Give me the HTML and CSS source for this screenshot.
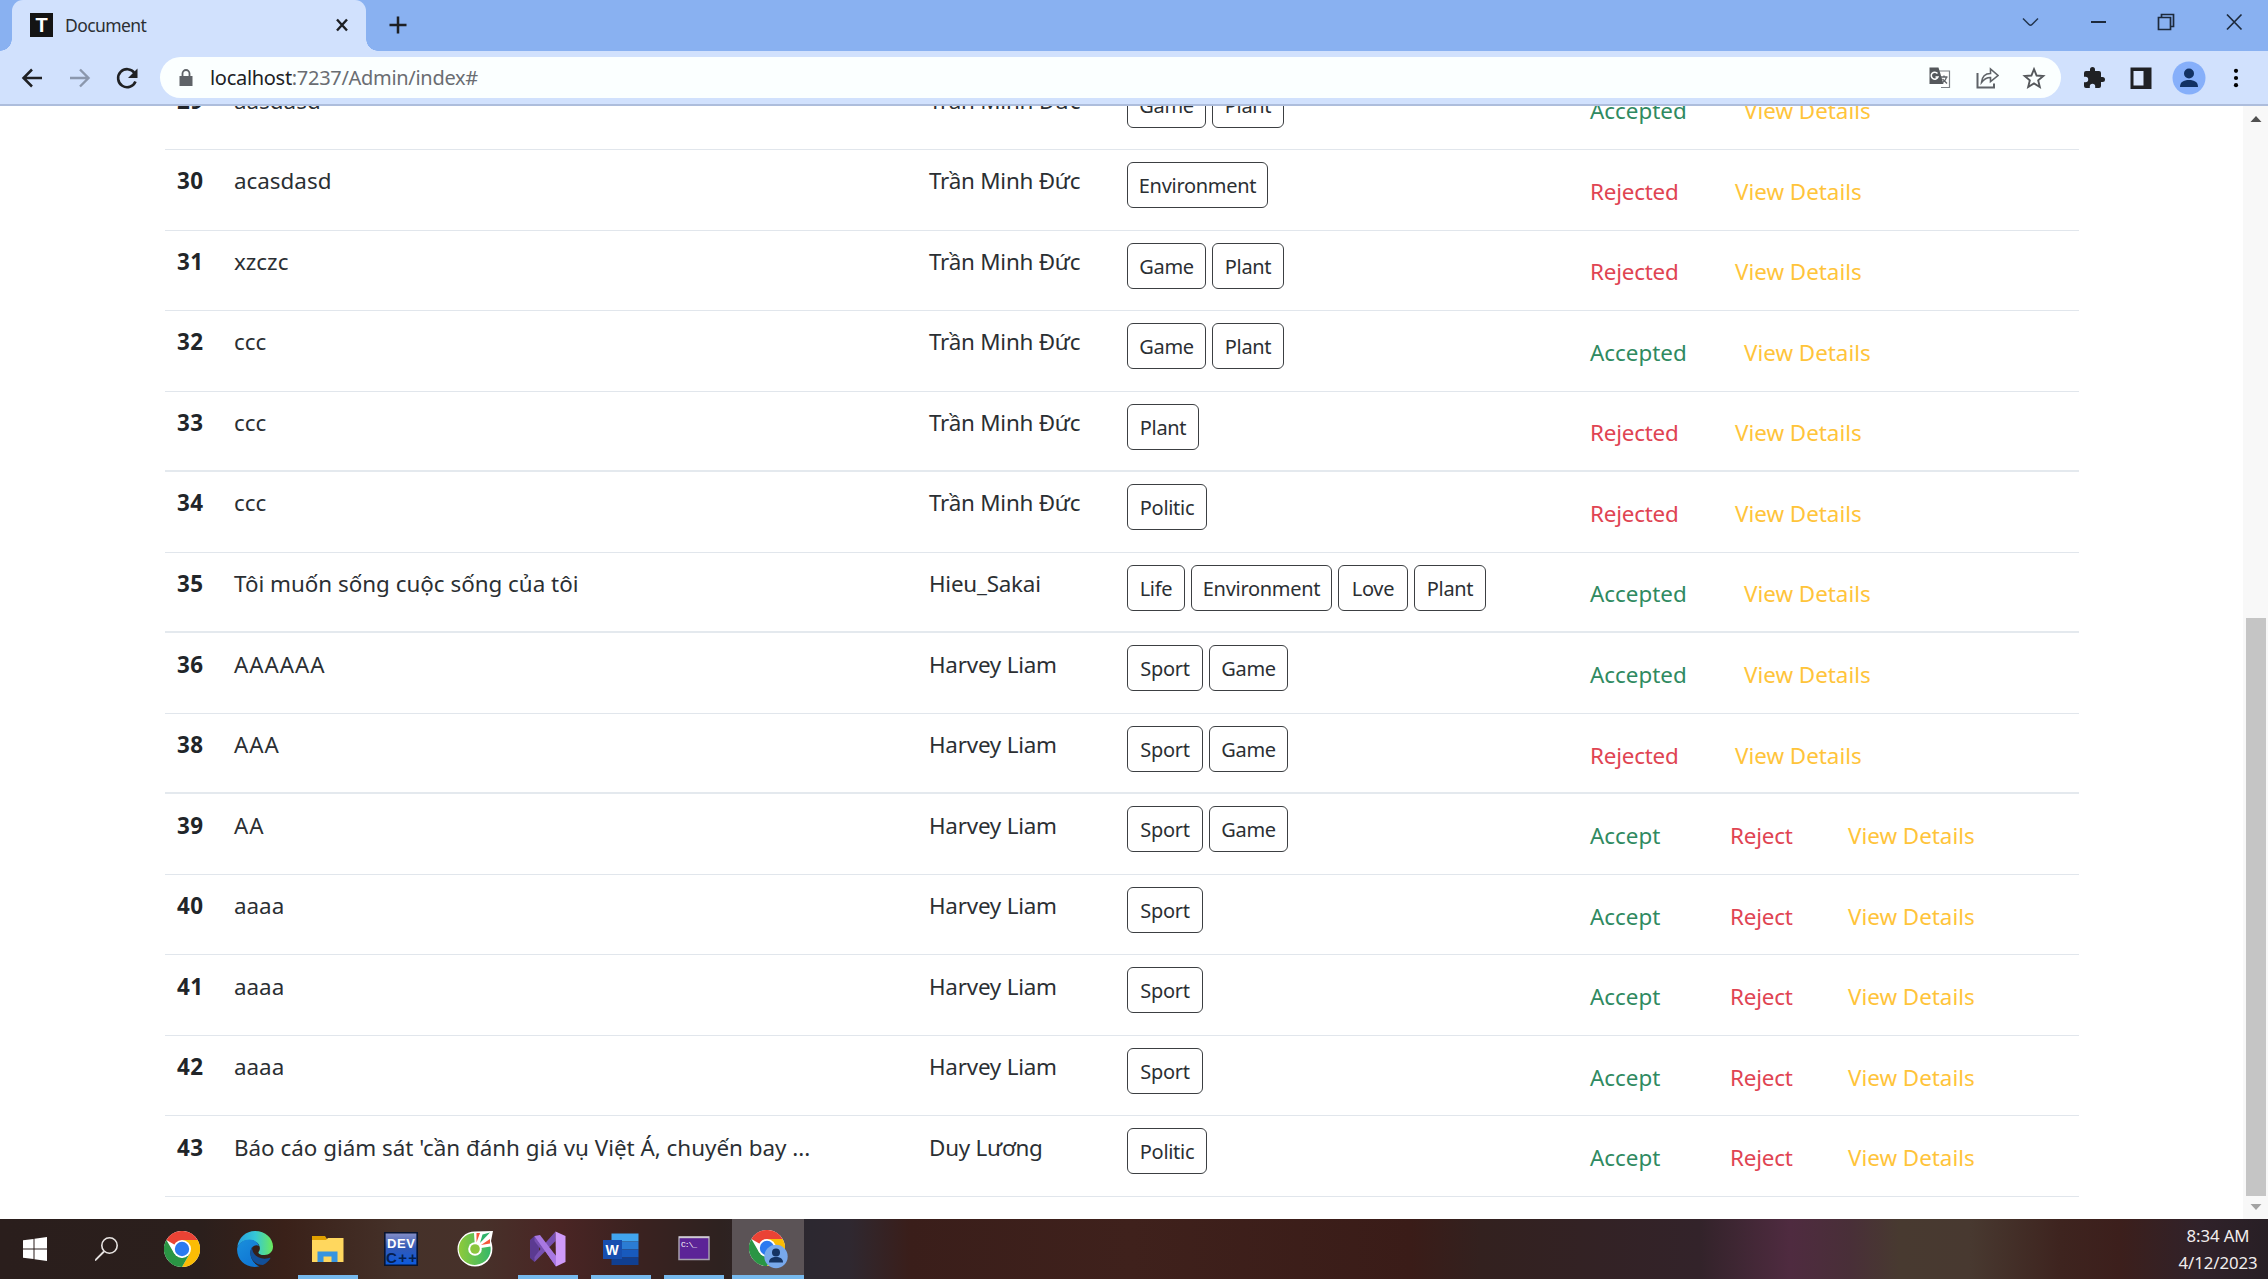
FILE: index.html
```html
<!DOCTYPE html>
<html lang="vi">
<head>
<meta charset="utf-8">
<title>Document</title>
<link rel="stylesheet" href="styles.css">
</head>
<body>
<svg class="defs" width="0" height="0">
  <symbol id="chrome" viewBox="0 0 36 36">
    <circle cx="18" cy="18" r="18" fill="#fff"/>
    <path d="M18 18 L2.4 9 A18 18 0 0 1 33.6 9 Z" fill="#ea4335"/>
    <path d="M18 9 H33.6 A18 18 0 0 1 18 36 L25.8 22.5 Z" fill="#fbbc05"/>
    <path d="M10.2 22.5 L2.4 9 A18 18 0 0 0 18 36 L25.8 22.5 L18 27 Z" fill="#2a9544"/>
    <circle cx="18" cy="18" r="9" fill="#fff"/>
    <circle cx="18" cy="18" r="7.2" fill="#2b7af0"/>
  </symbol>
</svg>
<header>
  <div class="tabstrip">
    <div class="tab">
      <span class="favicon">T</span>
      <span class="tab-title">Document</span>
      <svg class="tab-close" width="14" height="14" viewBox="0 0 14 14"><path d="M2 1.500 12 12.500M12 1.500 2 12.500" stroke="#1d1f23" stroke-width="2.400"/></svg>
    </div>
    <svg class="newtab" width="20" height="20" viewBox="0 0 20 20"><path d="M10 1.500v17M1.500 10h17" stroke="#1d1f23" stroke-width="2.500"/></svg>
    <div class="window-buttons">
      <svg width="68" height="44" viewBox="0 0 68 44"><path d="M27 18.500 33 24.500Q34.500 26 36 24.500L42 18.500" fill="none" stroke="#24364f" stroke-width="1.500"/></svg>
      <svg width="68" height="44" viewBox="0 0 68 44"><path d="M27 22h15" stroke="#1d2a3c" stroke-width="2"/></svg>
      <svg width="68" height="44" viewBox="0 0 68 44"><path d="M26.500 17.500h12v12h-12zM29.500 17v-2.500h12v12h-2.500" fill="none" stroke="#1d2a3c" stroke-width="1.700"/></svg>
      <svg width="68" height="44" viewBox="0 0 68 44"><path d="M27 14.500 41.500 29.500M41.500 14.500 27 29.500" stroke="#1d2a3c" stroke-width="1.700"/></svg>
    </div>
  </div>
  <div class="toolbar">
    <div class="nav">
      <svg width="48" height="26" viewBox="0 0 48 26"><path d="M34 13H16M24 4.500 15.500 13 24 21.500" fill="none" stroke="#202124" stroke-width="2.500"/></svg>
      <svg width="48" height="26" viewBox="0 0 48 26"><path d="M14 13h18M24 4.500 32.500 13 24 21.500" fill="none" stroke="#8b97ad" stroke-width="2.400"/></svg>
      <svg width="48" height="26" viewBox="0 0 48 26"><path d="M30.500 8A9 9 0 1 0 31.500 16.500" fill="none" stroke="#202124" stroke-width="2.600"/><path d="M33.500 3.500v9.500h-9.500z" fill="#202124"/></svg>
    </div>
    <div class="address">
      <svg width="14" height="18" viewBox="0 0 14 18"><path d="M.5 7h13v10h-13z" fill="#5f6368"/><path d="M3.500 8V4.500a3.500 3.500 0 0 1 7 0V8" fill="none" stroke="#5f6368" stroke-width="1.800"/></svg>
      <span class="url"><b>localhost</b>:7237/Admin/index#</span>
      <div class="address-icons">
        <svg width="24" height="24" viewBox="0 0 24 24"><path d="M11 5h10.500v16.500H13" fill="#fff" stroke="#7b7f84" stroke-width="1.200"/><path d="M1.500 1.500h9l5 16.500h-14z" fill="#55585c"/><path d="M9.500 7.500a3.500 3.500 0 1 0 .5 3.500H7.500" fill="none" stroke="#fff" stroke-width="1.500"/><path d="M12.500 11h7M16 9.500V11M18.500 11c-.5 3-3 5-4.500 6M14.500 13l4.500 4.500" fill="none" stroke="#5f6368" stroke-width="1.300"/></svg>
        <svg width="24" height="24" viewBox="0 0 24 24"><path d="M2.500 7v14.500h16.500V17.500" fill="none" stroke="#5f6368" stroke-width="2"/><path d="M6.500 16.500C7 11 10 7.500 15.500 7.500V3L23 9.500l-7.500 6V11.500C11.500 11.500 9 13 6.500 16.500z" fill="none" stroke="#5f6368" stroke-width="1.600"/></svg>
        <svg width="24" height="24" viewBox="0 0 24 24"><path d="M12 3.200l2.600 6.300 6.700.5-5.100 4.400 1.600 6.600-5.800-3.600-5.800 3.600 1.600-6.600-5.100-4.400 6.700-.5z" fill="none" stroke="#55585c" stroke-width="1.900"/></svg>
      </div>
    </div>
    <div class="tools">
      <svg width="24" height="24" viewBox="0 0 24 24"><path d="M20.500 11H19V7a2 2 0 0 0-2-2h-4V3.500a2.500 2.500 0 0 0-5 0V5H4a2 2 0 0 0-2 2v3.800h1.500a2.700 2.700 0 0 1 0 5.400H2V20a2 2 0 0 0 2 2h3.800v-1.500a2.700 2.700 0 0 1 5.400 0V22H17a2 2 0 0 0 2-2v-4h1.500a2.500 2.500 0 0 0 0-5z" fill="#202124"/></svg>
      <svg width="24" height="24" viewBox="0 0 24 24"><path d="M1.500 1.500h21v21.500h-21z" fill="#202124"/><path d="M4.500 5h10v14.500h-10z" fill="#dbe7fd"/></svg>
      <svg width="34" height="34" viewBox="0 0 34 34"><circle cx="17" cy="17" r="16.500" fill="#86affa"/><circle cx="17" cy="12.500" r="5" fill="#123163"/><path d="M8 26c0-5 3.500-7 9-7s9 2 9 7z" fill="#123163"/></svg>
      <svg width="24" height="24" viewBox="0 0 24 24"><circle cx="11" cy="4.800" r="2.100"/><circle cx="11" cy="12" r="2.100"/><circle cx="11" cy="19.200" r="2.100"/></svg>
    </div>
  </div>
</header>
<main>
  <div class="posts">
    <div class="row"><span class="id">29</span><span class="title">aasdasd</span><span class="author">Trần Minh Đức</span><span class="tags"><i class="game">Game</i><i class="plant">Plant</i></span><span class="actions"><a class="ok done">Accepted</a><a class="view">View Details</a></span></div>
    <div class="row"><span class="id">30</span><span class="title">acasdasd</span><span class="author">Trần Minh Đức</span><span class="tags"><i class="env">Environment</i></span><span class="actions"><a class="no done">Rejected</a><a class="view">View Details</a></span></div>
    <div class="row"><span class="id">31</span><span class="title">xzczc</span><span class="author">Trần Minh Đức</span><span class="tags"><i class="game">Game</i><i class="plant">Plant</i></span><span class="actions"><a class="no done">Rejected</a><a class="view">View Details</a></span></div>
    <div class="row"><span class="id">32</span><span class="title">ccc</span><span class="author">Trần Minh Đức</span><span class="tags"><i class="game">Game</i><i class="plant">Plant</i></span><span class="actions"><a class="ok done">Accepted</a><a class="view">View Details</a></span></div>
    <div class="row heavy"><span class="id">33</span><span class="title">ccc</span><span class="author">Trần Minh Đức</span><span class="tags"><i class="plant">Plant</i></span><span class="actions"><a class="no done">Rejected</a><a class="view">View Details</a></span></div>
    <div class="row"><span class="id">34</span><span class="title">ccc</span><span class="author">Trần Minh Đức</span><span class="tags"><i class="politic">Politic</i></span><span class="actions"><a class="no done">Rejected</a><a class="view">View Details</a></span></div>
    <div class="row heavy"><span class="id">35</span><span class="title">Tôi muốn sống cuộc sống của tôi</span><span class="author">Hieu_Sakai</span><span class="tags"><i class="life">Life</i><i class="env">Environment</i><i class="love">Love</i><i class="plant">Plant</i></span><span class="actions"><a class="ok done">Accepted</a><a class="view">View Details</a></span></div>
    <div class="row"><span class="id">36</span><span class="title caps">AAAAAA</span><span class="author">Harvey Liam</span><span class="tags"><i class="sport">Sport</i><i class="game">Game</i></span><span class="actions"><a class="ok done">Accepted</a><a class="view">View Details</a></span></div>
    <div class="row heavy"><span class="id">38</span><span class="title caps">AAA</span><span class="author">Harvey Liam</span><span class="tags"><i class="sport">Sport</i><i class="game">Game</i></span><span class="actions"><a class="no done">Rejected</a><a class="view">View Details</a></span></div>
    <div class="row"><span class="id">39</span><span class="title caps">AA</span><span class="author">Harvey Liam</span><span class="tags"><i class="sport">Sport</i><i class="game">Game</i></span><span class="actions"><a class="ok">Accept</a><a class="no">Reject</a><a class="view">View Details</a></span></div>
    <div class="row"><span class="id">40</span><span class="title">aaaa</span><span class="author">Harvey Liam</span><span class="tags"><i class="sport">Sport</i></span><span class="actions"><a class="ok">Accept</a><a class="no">Reject</a><a class="view">View Details</a></span></div>
    <div class="row"><span class="id">41</span><span class="title">aaaa</span><span class="author">Harvey Liam</span><span class="tags"><i class="sport">Sport</i></span><span class="actions"><a class="ok">Accept</a><a class="no">Reject</a><a class="view">View Details</a></span></div>
    <div class="row"><span class="id">42</span><span class="title">aaaa</span><span class="author">Harvey Liam</span><span class="tags"><i class="sport">Sport</i></span><span class="actions"><a class="ok">Accept</a><a class="no">Reject</a><a class="view">View Details</a></span></div>
    <div class="row"><span class="id">43</span><span class="title">Báo cáo giám sát 'cần đánh giá vụ Việt Á, chuyến bay ...</span><span class="author">Duy Lương</span><span class="tags"><i class="politic">Politic</i></span><span class="actions"><a class="ok">Accept</a><a class="no">Reject</a><a class="view">View Details</a></span></div>
  </div>
  <div class="scrollbar">
    <svg width="12" height="8" viewBox="0 0 12 8"><path d="M.5 7 6 1l5.500 6z" fill="#505050"/></svg>
    <div class="thumb"></div>
    <svg class="down" width="12" height="8" viewBox="0 0 12 8"><path d="M.5 1 6 7l5.500-6z" fill="#a3a3a3"/></svg>
  </div>
</main>
<footer>
  <div class="app"><svg width="24" height="24" viewBox="0 0 24 24"><path d="M0 3.300 10.500 2v9.500H0zM11.500 1.800 24 0v11.500H11.500zM0 12.500h10.500V22L0 20.700zM11.500 12.500H24V24l-12.500-1.800z" fill="#fff"/></svg></div>
  <div class="app"><svg width="24" height="24" viewBox="0 0 24 24"><circle cx="14.500" cy="8.500" r="7.700" fill="none" stroke="#e8e4e2" stroke-width="1.600"/><path d="M9 14.500 0 23.500" stroke="#e8e4e2" stroke-width="1.800"/></svg></div>
  <div class="app"><svg width="36" height="36"><use href="#chrome"/></svg></div>
  <div class="app"><svg width="36" height="36" viewBox="0 0 36 36">
    <defs>
      <linearGradient id="edge-top" x1="0" y1=".5" x2="1" y2=".5"><stop offset="0" stop-color="#259fe0"/><stop offset=".5" stop-color="#35c7d8"/><stop offset="1" stop-color="#6bea5c"/></linearGradient>
      <linearGradient id="edge-left" x1="0" y1="0" x2=".6" y2="1"><stop offset="0" stop-color="#1a8fdc"/><stop offset="1" stop-color="#0f76d4"/></linearGradient>
    </defs>
    <path d="M.3 16C1.500 6.500 9 0 18 0c10.500 0 18 7.500 18 15.500 0 5.500-4 8.500-8.500 8.500-4 0-6.500-1.500-6-3 2-2 2-6-1-9C14 6.500 4.500 9 .3 16z" fill="url(#edge-top)"/>
    <path d="M.2 17C2 11.500 7 8.500 12.500 8.500c4.500 0 8.500 3 9.500 6.500-3.500-2.500-9 .5-8.500 8 .3 5.500 4 10.500 9 12.300C10 38.500-1 29 .2 17z" fill="url(#edge-left)"/>
    <path d="M15 16c-5 8 1.500 18 11 18 3-1.500 6-4 7.500-7-1-.8-2 .8-6 .8-7 0-12.500-5-12.500-11.800z" fill="#124f98"/>
  </svg></div>
  <div class="app running"><svg width="32" height="28" viewBox="0 0 32 28"><path d="M0 1h13l2 3v5H0z" fill="#e0a000"/><path d="M0 5h14l2-2h15.500v24H0z" fill="#ffd75e"/><path d="M5.500 27V16.500h20V27h-6v-5.500h-8V27z" fill="#3794df"/></svg></div>
  <div class="app"><svg width="34" height="34" viewBox="0 0 34 34">
    <defs><linearGradient id="dev" x1="0" y1="0" x2="0" y2="1"><stop offset="0" stop-color="#8790c8"/><stop offset=".45" stop-color="#3459b5"/><stop offset="1" stop-color="#0b5be0"/></linearGradient></defs>
    <path d="M.8.800h32.400v32.400H.8z" fill="url(#dev)" stroke="#081530" stroke-width="1.600"/><text class="dev-top" x="17" y="16" textLength="28">DEV</text><text class="dev-bottom" x="17.500" y="31" textLength="31">C++</text></svg></div>
  <div class="app"><svg width="36" height="36" viewBox="0 0 36 36">
    <defs><linearGradient id="coc" x1="0" y1="0" x2="1" y2="0"><stop offset="0" stop-color="#8fca3a"/><stop offset="1" stop-color="#35b868"/></linearGradient></defs>
    <path d="M18 .5 36 0 34 10C39 24 30 35.500 18 35.500A17.500 17.500 0 0 1 18 .5z" fill="#fff"/>
    <path d="M17 2A16 16 0 1 0 33.500 15.500L18 18z" fill="url(#coc)"/>
    <path d="M19.500 2h3.500l-3.500 9.500zM33 8v4.500L24 14z" fill="#f5583a"/><path d="M25.500 3.500 33 1.500 23 12z" fill="#2fb36a"/>
    <circle cx="18" cy="18" r="6.800" fill="#fff"/><circle cx="18" cy="18" r="4.800" fill="#8cc63f"/></svg></div>
  <div class="app running"><svg width="36" height="36" viewBox="0 0 36 36"><path d="M0 9 4.500 5l4.500 9.500v7.500L4.500 31 0 27z" fill="#5b3a91"/><path d="M4.500 31 25.500 10V.5L13.500 14 4.500 5v5l6 8-6 8z" fill="#7750b0"/><path d="M4.500 5 26 35.500V25L9.500 7z" fill="#9a6ad6"/><path d="M4.500 5 10 4 26 25v10.500z" fill="#a878e2"/><path d="M25.500.5 35.500 5v26l-9.500 4.500z" fill="#cf9bfa"/></svg></div>
  <div class="app running"><svg width="36" height="32" viewBox="0 0 36 32"><path d="M8.500.5H35.500V8.500H8.500z" fill="#41a5ee"/><path d="M8.500 8.500H35.500v8H8.500z" fill="#2b7cd3"/><path d="M8.500 16.500H35.500v8H8.500z" fill="#185abd"/><path d="M8.500 24.500H35.500v7.500H8.500z" fill="#103f91"/><path d="M0 7h19v19H0z" fill="#174fb0"/><text class="word" x="9" y="21.500" textLength="14">W</text></svg></div>
  <div class="app running"><svg width="32" height="26" viewBox="0 0 32 26"><path d="M1 1h30v22.500H1z" fill="#5c2397" stroke="#a7a0ae" stroke-width="1.500"/><path d="M1 1.300h30" stroke="#cfcbd2" stroke-width="1.800"/><text class="cmd" x="3" y="10.500" textLength="16">C:\_</text></svg></div>
  <div class="app running active"><svg width="40" height="40" viewBox="0 0 40 40"><use href="#chrome" width="36" height="36" x="1" y="1"/><circle cx="28" cy="27.500" r="11.700" fill="#78a9ec"/><circle cx="28" cy="23.500" r="4" fill="#153463"/><path d="M21 33.500c0-4 3-5.500 7-5.500s7 1.500 7 5.500z" fill="#153463"/></svg></div>
  <div class="clock"><span class="time">8:34 AM</span><span class="date">4/12/2023</span></div>
</footer>
</body>
</html>
```
FILE: styles.css
```css
* { box-sizing: border-box; }
body {
  margin: 0;
  width: 2268px;
  height: 1279px;
  overflow: hidden;
  display: flex;
  flex-direction: column;
  background: #fff;
  font-family: "Noto Sans", "Open Sans", sans-serif;
  color: #2b2f33;
}
svg { display: block; flex: none; }
.defs { position: absolute; }

/* browser window */
header { flex: none; height: 106px; background: #d1e1fd; border-bottom: 2px solid #adbddc; }
.tabstrip { height: 51px; display: flex; align-items: flex-start; background: #89b1f1; }
.tab {
  position: relative;
  width: 354px;
  height: 51px;
  margin-left: 12px;
  padding: 0 17px 2px 18px;
  display: flex;
  align-items: center;
  background: #d1e1fd;
  border-radius: 11px 11px 0 0;
}
.tab::before, .tab::after {
  content: "";
  position: absolute;
  bottom: 0;
  width: 12px;
  height: 12px;
}
.tab::before { left: -12px; background: radial-gradient(circle at 0 0, #89b1f1 11.500px, #d1e1fd 12px); }
.tab::after { right: -12px; background: radial-gradient(circle at 100% 0, #89b1f1 11.500px, #d1e1fd 12px); }
.favicon {
  width: 23px;
  height: 24px;
  background: #141414;
  color: #fff;
  font: bold 20px/24px "Liberation Sans", sans-serif;
  text-align: center;
}
.tab-title { margin-left: 12px; font-size: 17.500px; letter-spacing: -.6px; line-height: 24px; }
.tab-close { margin-left: auto; }
.newtab { margin: 15px 0 0 22px; }
.window-buttons { display: flex; margin-left: auto; }
.toolbar { height: 53px; display: flex; align-items: center; }
.nav { display: flex; width: 160px; padding-left: 8px; }
.address {
  width: 1901px;
  height: 41px;
  padding: 0 15px 0 19px;
  display: flex;
  align-items: center;
  background: #fbffff;
  border-radius: 21px;
}
.url { margin-left: 17px; font-size: 20px; letter-spacing: -.3px; color: #6a6d72; white-space: nowrap; }
.url b { font-weight: 400; color: #202124; }
.address-icons { display: flex; gap: 23px; margin-left: auto; }
.tools { display: flex; align-items: center; gap: 19px; margin-left: 21px; }
.tools svg:nth-child(2) { margin-left: 4px; }

/* table of posts */
main { flex: 1; min-height: 0; display: flex; justify-content: space-between; overflow: hidden; }
.posts { width: 1914px; margin: -36.500px 0 0 165px; }
.row {
  height: 80.540px;
  display: grid;
  grid-template-columns: 69px 695px 198px 463px 1fr;
  align-items: start;
  border-bottom: 1px solid #e1e6ec;
  font-size: 22.400px;
  line-height: 32px;
  white-space: nowrap;
}
.heavy { border-bottom: 2px solid #e4e9ee; }
.id { padding: 15.300px 0 0 12px; font-weight: 700; letter-spacing: .4px; color: #212529; }
.title, .author { padding-top: 15.300px; }
.author { letter-spacing: -.22px; }
.caps { letter-spacing: .95px; }
.tags { display: flex; gap: 6px; padding-top: 12px; }
.tags i {
  height: 46px;
  border: 1.500px solid #3c3f42;
  border-radius: 6px;
  font-style: normal;
  font-size: 20px;
  letter-spacing: -.3px;
  line-height: 46px;
  text-align: center;
}
.game { width: 79px; }
.plant { width: 72px; }
.env { width: 141px; }
.politic { width: 80px; }
.life { width: 58px; }
.love { width: 70px; }
.sport { width: 76px; }
.actions { display: flex; padding-top: 25.800px; }
.ok { width: 140px; color: #2f8a61; }
.no { width: 118px; color: #e04452; letter-spacing: -.2px; }
.ok.done { width: 154px; }
.no.done { width: 145px; }
.view { color: #ffc43a; }
.scrollbar {
  width: 25px;
  padding: 9px 2px 8px 3px;
  display: flex;
  flex-direction: column;
  align-items: center;
  background: #f8f8f8;
}
.thumb { width: 20px; height: 578px; margin-top: auto; background: #c5c5c5; }
.down { margin-top: 7px; }

/* taskbar */
footer {
  flex: none;
  height: 60px;
  padding-right: 10px;
  display: flex;
  background: linear-gradient(90deg, #2a1e1c 0, #2b1f1c 200px, #3a2119 285px, #453129 400px, #47312a 480px, #4a2524 560px, #3a2220 640px, #2e2220 720px, #2c2830 810px, #2f2830 850px, #3a1e1a 910px, #3f211c 1130px, #3a1c18 1410px, #33211f 1480px, #33232a 1700px, #4f2b40 1790px, #492f38 1850px, #483a30 1900px, #483930 1970px, #3e241f 2060px, #3c1f1c 2120px, #30222a 2200px, #281f25 2268px);
}
.app { position: relative; width: 73.200px; display: flex; align-items: center; justify-content: center; }
.app:first-child { width: 70px; }
.app:nth-child(2) { margin-right: 2px; }
.running::after {
  content: "";
  position: absolute;
  left: 6.500px;
  bottom: 0;
  width: 60px;
  height: 4px;
  background: #76b9ed;
}
.active { width: 72px; margin-left: 1.500px; background: #5b5356; }
.active::after { left: 0; width: 72px; }
.clock {
  width: 80px;
  margin-left: auto;
  padding-top: 3px;
  display: flex;
  flex-direction: column;
  align-items: center;
  color: #f1eded;
  font-size: 16.800px;
  letter-spacing: -.1px;
  line-height: 27px;
  white-space: nowrap;
}
.dev-top, .dev-bottom { font: bold 13px "Liberation Sans", sans-serif; fill: #fff; text-anchor: middle; }
.dev-bottom { fill: #06204f; font-size: 15px; }
.word { font: bold 14px "Liberation Sans", sans-serif; fill: #fff; text-anchor: middle; }
.cmd { font: 8px "Liberation Mono", monospace; fill: #fff; }
```
